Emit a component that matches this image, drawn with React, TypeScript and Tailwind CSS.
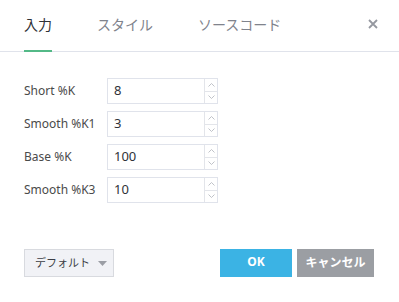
import React from "react";

interface Field {
  label: string;
  value: string;
}

const fields: Field[] = [
  { label: "Short %K", value: "8" },
  { label: "Smooth %K1", value: "3" },
  { label: "Base %K", value: "100" },
  { label: "Smooth %K3", value: "10" },
];

const tabs = ["入力", "スタイル", "ソースコード"];

const Spinner: React.FC = () => (
  <div className="flex w-[13px] flex-col border-l border-[#e3e5ea]">
    <div className="flex flex-1 items-center justify-center border-b border-[#e3e5ea]">
      <svg width="7" height="4" viewBox="0 0 7 4" fill="none">
        <path d="M0.5 3.5L3.5 0.5L6.5 3.5" stroke="#b9bcc3" strokeWidth="0.9" />
      </svg>
    </div>
    <div className="flex flex-1 items-center justify-center">
      <svg width="7" height="4" viewBox="0 0 7 4" fill="none">
        <path d="M0.5 0.5L3.5 3.5L6.5 0.5" stroke="#b9bcc3" strokeWidth="0.9" />
      </svg>
    </div>
  </div>
);

export default function App() {
  return (
    <div
      className="flex h-[302px] w-[399px] flex-col bg-white text-[#4a4a4a]"
      style={{ fontFamily: '"Noto Sans", "Noto Sans CJK JP", sans-serif' }}
    >
      {/* Header tabs */}
      <div className="flex h-[52px] items-stretch border-b border-[#e0e3eb] pl-6 pr-[21px]">
        <div className="flex flex-1 items-stretch gap-[45px]">
          {tabs.map((tab, i) => (
            <div
              key={tab}
              className={
                i === 0
                  ? "-mb-px flex h-[52px] items-center border-b-2 border-[#53b987] pb-[1px] text-[14px] text-[#2f3238]"
                  : "-mb-px flex h-[52px] items-center border-b-2 border-transparent pb-[1px] text-[14px] text-[#80838c]"
              }
            >
              {tab}
            </div>
          ))}
        </div>
        <div className="flex items-center pb-[4px]">
          <svg width="10" height="10" viewBox="0 0 10 10" fill="none">
            <path d="M1 1L9 9M9 1L1 9" stroke="#9598a0" strokeWidth="1.8" />
          </svg>
        </div>
      </div>

      {/* Form */}
      <div className="flex flex-col gap-[7px] pl-6 pt-[26px]">
        {fields.map((f) => (
          <div key={f.label} className="flex items-center">
            <span className="w-[83px] text-[12px]">{f.label}</span>
            <div className="flex h-[26px] w-[111px] border border-[#e0e3eb] bg-white">
              <span className="flex flex-1 items-center pl-[6px] text-[13px] text-[#2f3238]">
                {f.value}
              </span>
              <Spinner />
            </div>
          </div>
        ))}
      </div>

      {/* Footer */}
      <div className="mt-auto flex items-center pb-[25px] pl-6 pr-[25px]">
        <button className="flex h-[28px] w-[90px] items-center gap-[8px] whitespace-nowrap border border-[#d8dadf] bg-[#f1f2f6] pl-[10px] text-[11px] text-[#3b3e45]">
          <span>デフォルト</span>
          <svg className="shrink-0" width="9" height="5" viewBox="0 0 9 5">
            <path d="M0 0H9L4.5 5Z" fill="#9b9ea5" />
          </svg>
        </button>
        <div className="ml-auto flex gap-[5px]">
          <button className="h-[28px] w-[72px] bg-[#3bb3e4] pb-[3px] text-[12px] font-bold text-white">
            OK
          </button>
          <button className="h-[28px] w-[77px] bg-[#9b9ea3] text-[12px] font-bold text-white">
            キャンセル
          </button>
        </div>
      </div>
    </div>
  );
}
